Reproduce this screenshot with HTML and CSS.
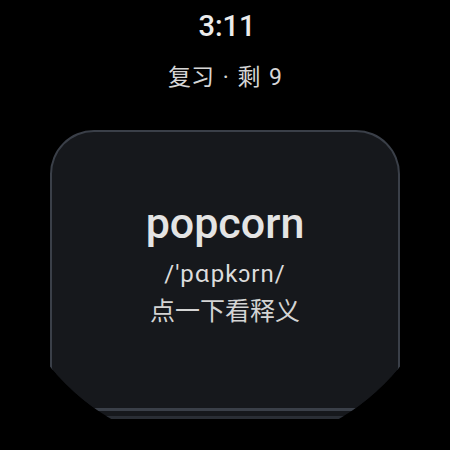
FILE: index.html
```html
<!DOCTYPE html>
<html lang="zh">
<head>
<meta charset="utf-8">
<title>复习</title>
<link rel="stylesheet" href="styles.css">
</head>
<body>
<div class="screen">
  <div class="time">3:11</div>
  <div class="subtitle">复习 · 剩 9</div>
  <div class="stack">
    <div class="card-behind"></div>
    <div class="card">
      <div class="word">popcorn</div>
      <div class="phonetic">/'pɑpkɔrn/</div>
      <div class="hint">点一下看释义</div>
    </div>
  </div>
</div>
</body>
</html>
```
FILE: styles.css
```css
html, body {
  margin: 0;
  padding: 0;
  background: #000;
}
.screen {
  width: 450px;
  height: 450px;
  border-radius: 50%;
  overflow: hidden;
  background: #000;
  display: flex;
  flex-direction: column;
  align-items: center;
  font-family: Roboto, "Noto Sans CJK SC", sans-serif;
  color: #e6e6e6;
}
.time {
  margin-top: 10px;
  padding-left: 4px;
  font-size: 29px;
  line-height: 32px;
  font-weight: 500;
  color: #ececec;
}
.subtitle {
  margin-top: 22px;
  font-size: 23px;
  line-height: 28px;
  word-spacing: 3px;
  color: #d6d6d6;
}
.stack {
  position: relative;
  margin-top: 38px;
  width: 350px;
}
.card-behind {
  position: absolute;
  left: 0;
  right: 0;
  top: 8px;
  bottom: -8px;
  box-sizing: border-box;
  border: 3px solid #2a2e35;
  border-radius: 44px;
  background: #16181c;
}
.card {
  position: relative;
  box-sizing: border-box;
  height: 281px;
  border: 2px solid #3a3f48;
  border-bottom-width: 3px;
  border-radius: 44px;
  background: #16181c;
  display: flex;
  flex-direction: column;
  align-items: center;
  padding-top: 67px;
}
.word {
  font-size: 43px;
  line-height: 48px;
  font-weight: 500;
  color: #e4e4e4;
}
.phonetic {
  margin-top: 13px;
  font-size: 24px;
  line-height: 28px;
  letter-spacing: 1px;
  color: #dcdcdc;
}
.hint {
  margin-top: 8px;
  font-size: 25px;
  line-height: 32px;
  color: #d4d4d4;
}
```
